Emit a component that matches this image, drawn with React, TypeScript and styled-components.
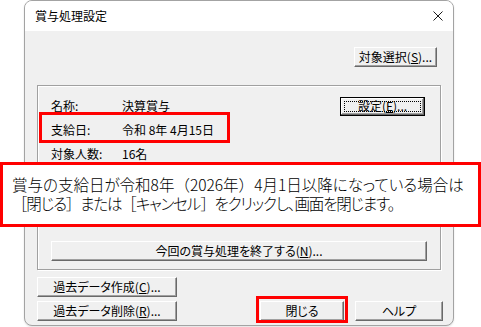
import React from "react";
import styled, { createGlobalStyle, css } from "styled-components";

const Global = createGlobalStyle`
  html, body { margin: 0; padding: 0; background: #fff; }
  body {
    font-family: "Noto Sans CJK JP", "Noto Sans", sans-serif;
    color: #000;
    font-feature-settings: "palt" 1;
  }
  * { box-sizing: border-box; }
`;

const Stage = styled.div`
  position: relative;
  width: 481px;
  height: 327px;
  padding-left: 24px;
`;

const Window = styled.div`
  width: 430px;
  height: 326px;
  border: 1px solid #a3a3a3;
  border-radius: 8px;
  background: #f0f0f0;
  overflow: hidden;
  display: flex;
  flex-direction: column;
  box-shadow: 0 1px 2px rgba(0, 0, 0, 0.12);
`;

const TitleBar = styled.div`
  height: 30px;
  flex: none;
  background: #fff;
  display: flex;
  align-items: center;
  justify-content: space-between;
  padding: 0 10px;
  font-size: 12px;
  line-height: 1;
`;

const Title = styled.span`
  font-size: 12px;
  font-feature-settings: normal;
`;

const CloseIcon = () => (
  <svg width="10" height="10" viewBox="0 0 10 10">
    <path d="M0.5 0.5 L9.5 9.5 M9.5 0.5 L0.5 9.5" stroke="#1a1a1a" strokeWidth="1" fill="none" />
  </svg>
);

const Body = styled.div`
  flex: 1;
  display: flex;
  flex-direction: column;
  padding: 16px 12px 0 12px;
`;

const TopRow = styled.div`
  display: flex;
  justify-content: flex-end;
  padding-right: 4px;
`;

const Button = styled.button<{ $w?: number; $h?: number; $default?: boolean; $full?: boolean }>`
  position: relative;
  width: ${(p) => (p.$full ? "100%" : `${p.$w ?? 84}px`)};
  height: ${(p) => p.$h ?? 20}px;
  padding: 0;
  margin: 0;
  background: #f0f0f0;
  font-family: "Noto Sans CJK JP", sans-serif;
  font-feature-settings: "palt" 1;
  font-size: 12px;
  line-height: 1;
  color: #000;
  display: flex;
  align-items: center;
  justify-content: center;
  border-style: solid;
  border-width: 1px;
  border-color: #ffffff #696969 #696969 #ffffff;
  box-shadow: inset -1px -1px 0 #a0a0a0;
  u { text-decoration: underline; text-underline-offset: 1px; }
  ${(p) =>
    p.$default &&
    css`
      border-color: #000;
      box-shadow: inset -1px -1px 0 #696969, inset 1px 1px 0 #fff, inset -2px -2px 0 #a0a0a0;
      &::after {
        content: "";
        position: absolute;
        inset: 3px;
        border: 1px dotted #000;
      }
    `}
`;

const GroupBox = styled.div`
  margin-top: 18px;
  height: 185px;
  border: 1px solid #a0a0a0;
  box-shadow: 1px 1px 0 #fff, inset 1px 1px 0 #fff;
  padding: 8px 13px 8px 13px;
  display: flex;
  flex-direction: column;
`;

const InfoRow = styled.div`
  display: flex;
  align-items: center;
  height: 24px;
  font-size: 12px;
  line-height: 1;
`;

const Label = styled.span`
  width: 71px;
  flex: none;
`;

const Value = styled.span`
  flex: 1;
  white-space: pre;
`;

const SettingSlot = styled.div`
  margin-right: 2px;
`;

const EndSlot = styled.div`
  margin-top: auto;
`;

const Footer = styled.div`
  margin-top: 7px;
  margin-right: -2px;
  display: flex;
  justify-content: space-between;
`;

const LeftCol = styled.div`
  display: flex;
  flex-direction: column;
  gap: 4px;
`;

const RightGroup = styled.div`
  align-self: flex-end;
  display: flex;
  gap: 11px;
`;

const Mark = styled.div<{ $x: number; $y: number; $w: number; $h: number }>`
  position: absolute;
  left: ${(p) => p.$x}px;
  top: ${(p) => p.$y}px;
  width: ${(p) => p.$w}px;
  height: ${(p) => p.$h}px;
  border: 3px solid #ff0000;
  pointer-events: none;
`;

const Callout = styled.div`
  position: absolute;
  left: 0;
  top: 162px;
  width: 481px;
  height: 65px;
  border: 3px solid #ff0000;
  background: #fff;
  padding: 10px 0 0 9px;
  font-size: 15.5px;
  font-weight: 300;
  line-height: 19px;
  color: #000;
  font-feature-settings: "palt" 1;
`;

const CalloutLine = styled.div<{ $tight?: boolean }>`
  white-space: nowrap;
  height: 19px;
  letter-spacing: ${(p) => (p.$tight ? "-1.15px" : "0")};
`;

const Bracket = styled.span`
  display: inline-block;
  height: 19px;
  line-height: 19px;
  font-feature-settings: normal;
`;

export default function App() {
  return (
    <>
      <Global />
      <Stage>
        <Window>
          <TitleBar>
            <Title>賞与処理設定</Title>
            <CloseIcon />
          </TitleBar>
          <Body>
            <TopRow>
              <Button $w={83}>
                対象選択(<u>S</u>)...
              </Button>
            </TopRow>
            <GroupBox>
              <InfoRow>
                <Label>名称:</Label>
                <Value>決算賞与</Value>
                <SettingSlot>
                  <Button $w={85} $h={19} $default>
                    設定(<u>E</u>)...
                  </Button>
                </SettingSlot>
              </InfoRow>
              <InfoRow>
                <Label>支給日:</Label>
                <Value>令和 8年 4月15日</Value>
              </InfoRow>
              <InfoRow>
                <Label>対象人数:</Label>
                <Value>16名</Value>
              </InfoRow>
              <EndSlot>
                <Button $full>
                  今回の賞与処理を終了する(<u>N</u>)...
                </Button>
              </EndSlot>
            </GroupBox>
            <Footer>
              <LeftCol>
                <Button $w={140}>
                  過去データ作成(<u>C</u>)...
                </Button>
                <Button $w={140}>
                  過去データ削除(<u>R</u>)...
                </Button>
              </LeftCol>
              <RightGroup>
                <Button $w={84}>閉じる</Button>
                <Button $w={88}>ヘルプ</Button>
              </RightGroup>
            </Footer>
          </Body>
        </Window>
        <Mark $x={39} $y={112} $w={191} $h={31} />
        <Callout>
          <CalloutLine>
            賞与の支給日が令和8年<Bracket>（</Bracket>2026年<Bracket>）</Bracket>4月1日以降になっている場合は
          </CalloutLine>
          <CalloutLine $tight>
            <Bracket>［</Bracket>閉じる<Bracket>］</Bracket>または<Bracket>［</Bracket>キャンセル
            <Bracket>］</Bracket>をクリックし、画面を閉じます。
          </CalloutLine>
        </Callout>
        <Mark $x={256} $y={296} $w={92} $h={27} />
      </Stage>
    </>
  );
}
